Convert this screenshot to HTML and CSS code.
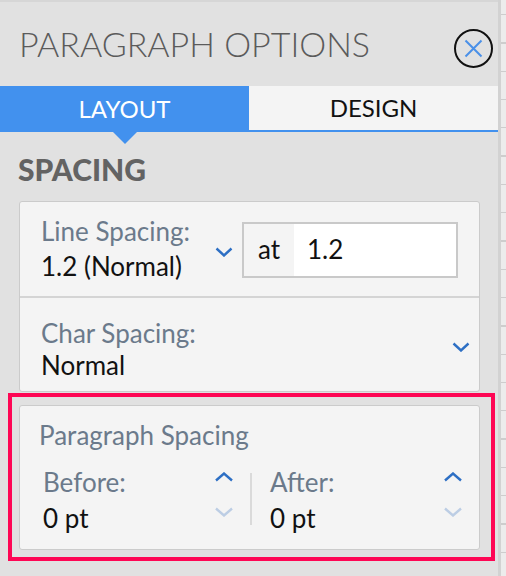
FILE: index.html
```html
<!DOCTYPE html>
<html lang="en">
<head>
<meta charset="utf-8">
<title>Paragraph Options</title>
<link rel="stylesheet" href="styles.css">
</head>
<body>
<div class="app">
  <div class="panel">
    <header class="header">
      <h1 class="title">PARAGRAPH OPTIONS</h1>
      <button class="close" aria-label="Close">
        <svg width="39" height="39" viewBox="0 0 39 39">
          <circle cx="19.5" cy="19.5" r="18.5" fill="none" stroke="#111" stroke-width="2"/>
          <path d="M11.5 11.5 L27.5 27.5 M27.5 11.5 L11.5 27.5" stroke="#4a90e8" stroke-width="2" fill="none"/>
        </svg>
      </button>
    </header>
    <nav class="tabs">
      <div class="tab tab-active">LAYOUT</div>
      <div class="tab">DESIGN</div>
    </nav>
    <h2 class="section">SPACING</h2>
    <div class="group">
      <div class="row row-line">
        <div class="field">
          <div class="label">Line Spacing:</div>
          <div class="value">1.2 (Normal)</div>
        </div>
        <svg class="chev" width="18" height="10" viewBox="0 0 18 10"><path d="M1.5 1.5 L9 8.5 L16.5 1.5" fill="none" stroke="#2d6fc4" stroke-width="2.4"/></svg>
        <div class="at-box">
          <span class="at">at</span>
          <span class="at-input">1.2</span>
        </div>
      </div>
      <div class="row row-char">
        <div class="field">
          <div class="label">Char Spacing:</div>
          <div class="value">Normal</div>
        </div>
        <svg class="chev" width="18" height="10" viewBox="0 0 18 10"><path d="M1.5 1.5 L9 8.5 L16.5 1.5" fill="none" stroke="#2d6fc4" stroke-width="2.4"/></svg>
      </div>
    </div>
    <div class="highlight">
      <div class="card">
        <div class="label card-label">Paragraph Spacing</div>
        <div class="steppers">
          <div class="stepper stepper-before">
            <div class="field">
              <div class="label">Before:</div>
              <div class="value">0 pt</div>
            </div>
            <div class="arrows">
              <svg width="20" height="10" viewBox="0 0 20 10"><path d="M2 8.5 L10 1.5 L18 8.5" fill="none" stroke="#2d6fc4" stroke-width="2.4"/></svg>
              <svg width="20" height="10" viewBox="0 0 20 10"><path d="M2 1.5 L10 8.5 L18 1.5" fill="none" stroke="#bccde4" stroke-width="2.4"/></svg>
            </div>
          </div>
          <div class="divider"></div>
          <div class="stepper stepper-after">
            <div class="field">
              <div class="label">After:</div>
              <div class="value">0 pt</div>
            </div>
            <div class="arrows">
              <svg width="20" height="10" viewBox="0 0 20 10"><path d="M2 8.5 L10 1.5 L18 8.5" fill="none" stroke="#2d6fc4" stroke-width="2.4"/></svg>
              <svg width="20" height="10" viewBox="0 0 20 10"><path d="M2 1.5 L10 8.5 L18 1.5" fill="none" stroke="#bccde4" stroke-width="2.4"/></svg>
            </div>
          </div>
        </div>
      </div>
    </div>
  </div>
  <div class="strip"><div class="strip-bar"></div><div class="strip-rows"></div></div>
</div>
</body>
</html>
```

FILE: styles.css
```css
* { box-sizing: border-box; }
html, body { margin: 0; padding: 0; }
body {
  width: 506px;
  height: 576px;
  overflow: hidden;
  background: #e1e1e1;
  font-family: Lato, "Open Sans", sans-serif;
}
.app {
  display: flex;
  height: 576px;
}
.panel {
  width: 498px;
  background: #e1e1e1;
  border-top: 2px solid #d6d6d6;
  display: flex;
  flex-direction: column;
}
.header {
  height: 84px;
  display: flex;
  align-items: center;
  justify-content: space-between;
  padding: 0 5px 0 19px;
}
.title {
  margin: 0;
  font-size: 34px;
  line-height: 42px;
  font-weight: 300;
  color: #5b5b5b;
}
.close {
  margin: 8px 0 0 0;
  padding: 0;
  border: 0;
  background: none;
  width: 39px;
  height: 39px;
  display: flex;
}
.tabs {
  display: flex;
  height: 46px;
}
.tab {
  flex: 1;
  text-align: center;
  font-size: 24px;
  line-height: 44px;
  color: #111;
  background: #f4f4f4;
  border-bottom: 2px solid #4291ee;
}
.tab-active {
  position: relative;
  background: #4291ee;
  color: #fff;
  line-height: 46px;
  border-bottom: 0;
}
.tab-active::after {
  content: "";
  position: absolute;
  left: 50%;
  bottom: -12px;
  margin-left: -12px;
  border-left: 12px solid transparent;
  border-right: 12px solid transparent;
  border-top: 12px solid #4291ee;
}
.section {
  margin: 20px 0 0 18px;
  font-size: 30px;
  line-height: 34px;
  font-weight: 900;
  color: #636363;
}
.group {
  margin: 15px 0 0 19px;
  width: 461px;
  border: 1px solid #cbcbcb;
  border-radius: 3px;
  background: #f4f4f4;
}
.row {
  display: flex;
  align-items: center;
  height: 96px;
  padding: 0 0 0 21px;
}
.row-line {
  border-bottom: 2px solid #d4d4d4;
}
.row-line .label, .row-line .value {
  line-height: 35px;
}
.row-char {
  height: 93px;
  padding-right: 9px;
}
.row-char .field {
  flex: 1;
  margin-top: 8px;
}
.row-char .chev { margin-top: 4px; }
.field {
  display: flex;
  flex-direction: column;
}
.label {
  font-size: 26px;
  line-height: 32px;
  color: #6b7a8b;
}
.value {
  font-size: 26px;
  line-height: 32px;
  color: #111;
}
.row-line .chev {
  margin: 6px 9px 0 25px;
}
.at-box {
  display: flex;
  width: 216px;
  height: 56px;
  margin-top: 1px;
  border: 2px solid #c9c9c9;
  font-size: 26px;
  color: #111;
}
.at {
  width: 50px;
  background: #f4f4f4;
  padding-left: 14px;
  line-height: 50px;
}
.at-input {
  flex: 1;
  background: #fff;
  padding-left: 13px;
  line-height: 50px;
}
.highlight {
  margin: 1px 0 0 8px;
  width: 487px;
  border: 4px solid #fe0654;
  padding: 8px 11px 7px 7px;
}
.card {
  border: 1px solid #cbcbcb;
  border-radius: 3px;
  background: #f4f4f4;
  height: 145px;
  padding: 12px 0 0 19px;
}
.card-label {
  line-height: 34px;
}
.steppers {
  display: flex;
  align-items: flex-start;
  margin-top: 12px;
}
.stepper {
  display: flex;
  align-items: flex-start;
}
.stepper .label, .stepper .value {
  line-height: 36px;
}
.stepper-before {
  width: 211px;
  padding: 0 16px 0 4px;
}
.stepper-after {
  flex: 1;
  padding: 0 16px 0 18px;
}
.stepper .field { flex: 1; }
.arrows {
  display: flex;
  flex-direction: column;
  gap: 25px;
  margin-top: 8px;
}
.divider {
  width: 2px;
  height: 52px;
  background: #dadada;
  margin-top: 9px;
}
.strip {
  width: 8px;
  display: flex;
}
.strip-bar {
  width: 3px;
  background: #d2d2d2;
}
.strip-rows {
  flex: 1;
  background-color: #ececec;
  background-image: repeating-linear-gradient(to bottom, transparent 0, transparent 27px, #cdcdcd 27px, #cdcdcd 28.3px);
  background-position: 0 -13px;
}
```
